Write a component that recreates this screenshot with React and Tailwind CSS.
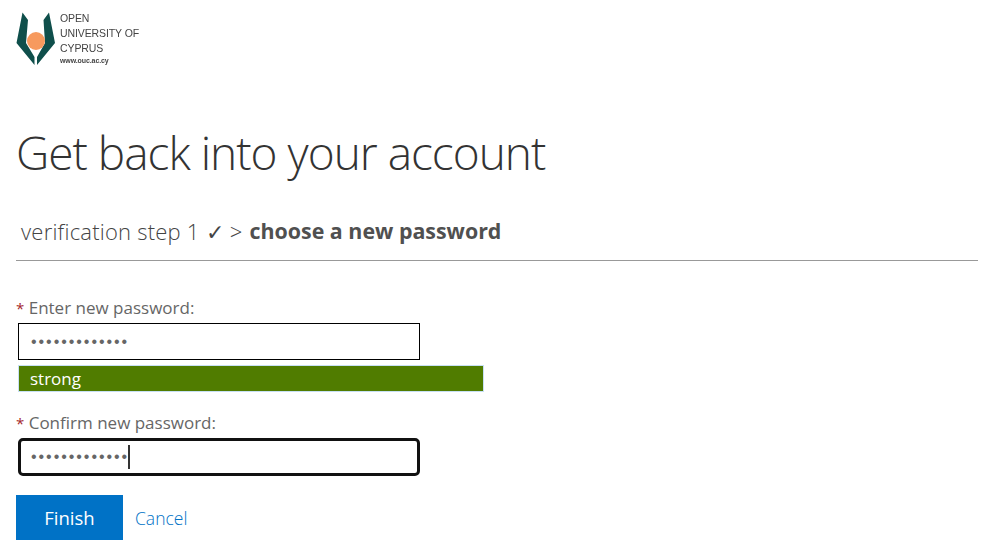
export default function App() {
  const dots = "•••••••••••••";
  return (
    <div className="w-[991px] h-[550px] overflow-hidden bg-white pl-4 font-['Noto_Sans',sans-serif] text-[#505050]">
      <div className="flex h-[70px] pt-[10px] items-start">
        <svg width="40" height="58" viewBox="16 10 40 58" className="shrink-0 blur-[0.3px]">
          <path d="M22.5 12.5 L28 20 L26 43 L34.5 57 L34.5 65 L16.5 43 Z" fill="#0f4f4b" />
          <path d="M49 12.5 L43.5 20 L45 43 L37 57 L37 65 L55 43 Z" fill="#0f4f4b" />
          <circle cx="36" cy="41" r="9" fill="#f79a5e" />
        </svg>
        <div className="ml-[4px] pt-px blur-[0.4px] font-['Liberation_Sans',sans-serif] text-[#444] text-[10.5px] leading-[15px] tracking-[-0.1px]">
          <div>OPEN</div>
          <div className="whitespace-nowrap">UNIVERSITY OF</div>
          <div>CYPRUS</div>
          <div className="text-[7px] leading-[9px] font-bold">www.ouc.ac.cy</div>
        </div>
      </div>
      <h1 className="mt-[44px] h-[70px] font-['Open_Sans',sans-serif] font-light text-[46px] leading-[76px] text-[#333] whitespace-nowrap tracking-[-1px]">
        Get back into your account
      </h1>
      <div className="mt-[32px] pl-[5px] w-[962px] h-[45px] border-b border-[#999] flex items-start whitespace-nowrap leading-[30px]">
        <span className="font-['Open_Sans',sans-serif] font-light text-[22px] tracking-[0.22px] text-[#444]">verification step 1 ✓ &gt;</span>
        <span className="ml-[7px] font-['Open_Sans',sans-serif] font-bold text-[21.4px] text-[#505050]">choose a new password</span>
      </div>
      <div className="mt-[35px] text-[17px] leading-[24px] text-[#666] font-['Open_Sans',sans-serif]">
        <span className="text-[#a4262c] text-[15px]">*</span> Enter new password:
      </div>
      <div className="mt-[3px] ml-[2px] w-[402px] h-[37px] border border-black flex items-center pl-[12px] text-[#666] text-[16px] tracking-[1.95px] font-['Liberation_Sans',sans-serif]">
        {dots}
      </div>
      <div className="mt-[5px] ml-[2px] w-[466px] h-[27px] border border-[#c7e0f4] bg-[#507c00] text-white pl-[11px] text-[17px] leading-[26px] font-['Open_Sans',sans-serif]">
        strong
      </div>
      <div className="mt-[19px] text-[17px] leading-[24px] text-[#666] font-['Open_Sans',sans-serif]">
        <span className="text-[#a4262c] text-[15px]">*</span> Confirm new password:
      </div>
      <div className="mt-[3px] ml-[2px] w-[402px] h-[38px] border-[3px] border-[#111] rounded-[5px] flex items-center pl-[10px] text-[#666] text-[16px] tracking-[1.95px] font-['Liberation_Sans',sans-serif]">
        {dots}
        <span className="ml-[-1px] w-[2px] h-[24px] bg-[#333]" />
      </div>
      <div className="mt-[19px] flex items-center">
        <div className="w-[107px] h-[45px] bg-[#0072c6] text-white text-[18.5px] flex items-center justify-center font-['Open_Sans',sans-serif]">
          Finish
        </div>
        <span className="ml-[12px] mt-[2px] text-[#0072c6] text-[17.5px] font-['Open_Sans',sans-serif] font-light">Cancel</span>
      </div>
    </div>
  );
}
